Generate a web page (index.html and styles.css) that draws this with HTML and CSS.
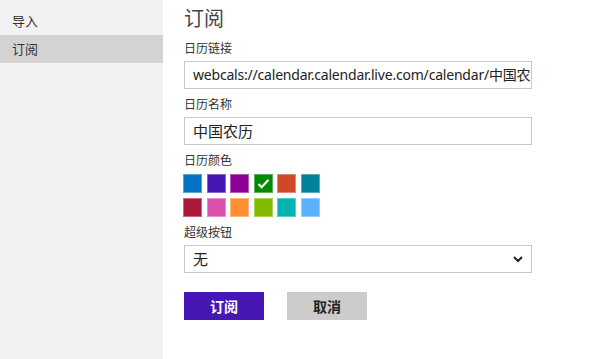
FILE: index.html
```html
<!DOCTYPE html>
<html lang="zh-CN">
<head>
  <meta charset="UTF-8">
  <title>订阅</title>
  <link rel="stylesheet" href="styles.css">
</head>
<body>
  <div class="app">
    <nav class="sidebar">
      <div class="nav-item">导入</div>
      <div class="nav-item active">订阅</div>
    </nav>

    <main class="panel">
      <h1 class="title">订阅</h1>

      <label class="label">日历链接</label>
      <div class="field url">webcals://calendar.calendar.live.com/calendar/中国农历</div>

      <label class="label">日历名称</label>
      <div class="field">中国农历</div>

      <label class="label">日历颜色</label>
      <div class="swatches">
        <span class="swatch" style="background:#0072c6"></span>
        <span class="swatch" style="background:#4617b4"></span>
        <span class="swatch" style="background:#8c0095"></span>
        <span class="swatch checked" style="background:#008a00">
          <svg width="13" height="11" viewBox="0 0 14 12"><path d="M1.5 6.5 L5 10 L12.5 2" fill="none" stroke="#fff" stroke-width="2.4"/></svg>
        </span>
        <span class="swatch" style="background:#d24726"></span>
        <span class="swatch" style="background:#008299"></span>
        <span class="swatch" style="background:#ac193d"></span>
        <span class="swatch" style="background:#dc4fad"></span>
        <span class="swatch" style="background:#ff8f32"></span>
        <span class="swatch" style="background:#82ba00"></span>
        <span class="swatch" style="background:#03b3b2"></span>
        <span class="swatch" style="background:#5db2ff"></span>
      </div>

      <label class="label">超级按钮</label>
      <div class="field select">
        <span>无</span>
        <svg width="10" height="7" viewBox="0 0 10 7"><path d="M1 1 L5 5 L9 1" fill="none" stroke="#222" stroke-width="2"/></svg>
      </div>

      <div class="actions">
        <button class="btn primary">订阅</button>
        <button class="btn">取消</button>
      </div>
    </main>
  </div>
</body>
</html>
```

FILE: styles.css
```css
body {
  margin: 0;
  font-family: 'Noto Sans', 'Noto Sans CJK SC', sans-serif;
  color: #222;
  background-color: #fff;
}

.app {
  display: flex;
  height: 359px;
}

.sidebar {
  width: 163px;
  background-color: #f2f2f2;
  padding-top: 7px;
}

.nav-item {
  height: 28px;
  line-height: 28px;
  padding-left: 12px;
  font-size: 13px;
  color: #333;
}

.nav-item.active {
  background-color: #d3d3d3;
}

.panel {
  padding-left: 21px;
  width: 348px;
}

.title {
  margin: 5px 0 0;
  font-size: 20px;
  font-weight: normal;
  line-height: 28px;
  color: #444;
}

.label {
  display: block;
  margin: 7px 0 4px;
  font-size: 12px;
  line-height: 17px;
  color: #333;
}

.field {
  box-sizing: border-box;
  height: 28px;
  border: 1px solid #c8c8c8;
  padding: 0 8px;
  font-size: 15px;
  line-height: 26px;
  color: #222;
  white-space: nowrap;
  overflow: hidden;
}

.url {
  font-size: 14px;
  letter-spacing: -0.2px;
}

.select {
  display: flex;
  justify-content: space-between;
  align-items: center;
}

.swatches {
  display: grid;
  grid-template-columns: repeat(6, 19px);
  grid-auto-rows: 19px;
  gap: 5px 4.6px;
  margin-left: -1px;
  padding-top: 1px;
}

.swatch {
  display: flex;
  align-items: center;
  justify-content: center;
  box-shadow: inset 0 0 0 1px rgba(255, 255, 255, 0.35);
}

.actions {
  display: flex;
  gap: 23px;
  margin-top: 19px;
}

.btn {
  width: 80px;
  height: 28px;
  border: none;
  padding: 0;
  font-family: 'Noto Sans CJK SC', sans-serif;
  font-size: 14px;
  font-weight: bold;
  background-color: #cccccc;
  color: #222;
}

.btn.primary {
  background-color: #4617b4;
  color: #fff;
}
```
